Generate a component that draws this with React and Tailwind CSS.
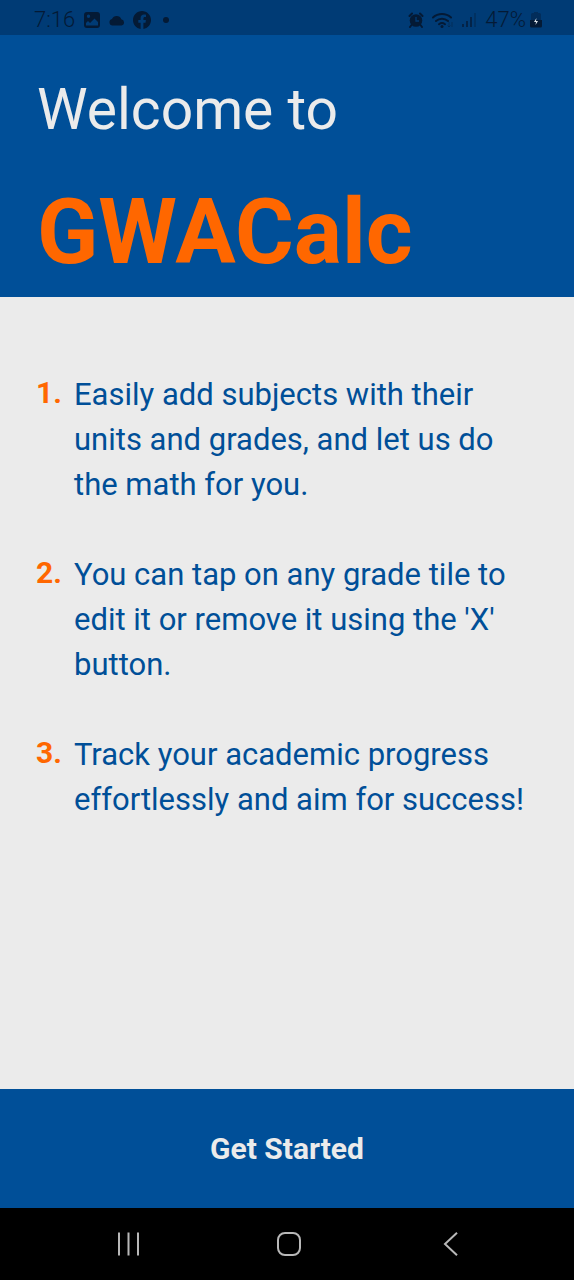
import React from "react";

const steps = [
  "Easily add subjects with their units and grades, and let us do the math for you.",
  "You can tap on any grade tile to edit it or remove it using the 'X' button.",
  "Track your academic progress effortlessly and aim for success!",
];

function PictureIcon() {
  return (
    <svg className="h-[18px] w-[18px]" viewBox="0 0 18 18" aria-hidden="true">
      <path
        fill="currentColor"
        fillRule="evenodd"
        d="M4 1h10a3 3 0 0 1 3 3v10a3 3 0 0 1-3 3H4a3 3 0 0 1-3-3V4a3 3 0 0 1 3-3Zm1.500 2.500a1.700 1.700 0 1 0 0 3.400 1.700 1.700 0 0 0 0-3.400ZM3 14.500h12V11l-3.500-3.500L7 12l-2-2-2 2Z"
      />
    </svg>
  );
}

function CloudIcon() {
  return (
    <svg className="h-3 w-4" viewBox="0 0 16 12" fill="currentColor" aria-hidden="true">
      <path d="M3.500 11.500a3.300 3.300 0 0 1-.5-6.500A5 5 0 0 1 12.300 5.200a3.200 3.200 0 0 1 .2 6.300Z" />
    </svg>
  );
}

function FacebookIcon() {
  return (
    <svg className="h-[18px] w-[18px]" viewBox="0 0 24 24" fill="currentColor" aria-hidden="true">
      <path d="M24 12.070C24 5.410 18.630 0 12 0S0 5.410 0 12.070C0 18.100 4.390 23.090 10.130 24v-8.440H7.080v-3.490h3.050V9.410c0-3.020 1.790-4.690 4.530-4.690 1.310 0 2.690.24 2.690.24v2.970h-1.520c-1.490 0-1.950.93-1.950 1.880v2.260h3.320l-.53 3.490h-2.790V24C19.610 23.090 24 18.100 24 12.070Z" />
    </svg>
  );
}

function AlarmIcon() {
  return (
    <svg className="h-4 w-4" viewBox="0 0 16 16" aria-hidden="true">
      <g fill="none" stroke="currentColor" strokeWidth="2" strokeLinecap="round">
        <path d="M1.500 4 4 1.500M14.500 4 12 1.500M3.500 13 2 15M12.500 13l1.500 2" />
      </g>
      <circle cx="8" cy="8.500" r="6.300" fill="currentColor" />
      <path d="M8 5v4h3" fill="none" stroke="#003b75" strokeWidth="1.300" />
    </svg>
  );
}

function WifiIcon() {
  return (
    <svg className="h-4 w-[22px]" viewBox="0 0 22 16" aria-hidden="true">
      <g fill="none" stroke="currentColor" strokeWidth="2" strokeLinecap="round">
        <path d="M1 5.500a13.500 13.500 0 0 1 18 0M4 9a9 9 0 0 1 12 0M7 12.200a5 5 0 0 1 6 0" />
      </g>
      <circle cx="10" cy="14.500" r="1.500" fill="currentColor" />
      <path d="M17 10v5m-1.500-1.500L17 15l1.500-1.500M20 15v-5" fill="none" stroke="currentColor" opacity=".4" />
    </svg>
  );
}

function SignalIcon() {
  return (
    <svg className="h-4 w-[15px]" viewBox="0 0 15 16" fill="currentColor" aria-hidden="true">
      <rect x="0" y="12" width="2" height="3" opacity=".7" />
      <rect x="4" y="9" width="2" height="6" opacity=".7" />
      <rect x="8" y="5" width="2" height="10" opacity=".7" />
      <rect x="12" y="1" width="2" height="14" opacity=".3" />
    </svg>
  );
}

function BatteryIcon() {
  return (
    <svg className="h-4 w-3" viewBox="0 0 12 16" aria-hidden="true">
      <path d="M4 0h4v1h1.500A1.500 1.500 0 0 1 11 2.500V8H1V2.500A1.500 1.500 0 0 1 2.500 1H4Z" fill="currentColor" opacity=".4" />
      <path d="M0 8h12v6a1.500 1.500 0 0 1-1.500 1.500h-9A1.500 1.500 0 0 1 0 14Z" fill="currentColor" />
      <path d="M6.500 6 4 10h2l-.5 3L8 9H6Z" fill="#dde3e8" />
    </svg>
  );
}

export default function App() {
  return (
    <div className="flex min-h-screen flex-col bg-[#ebebeb] font-['Roboto',sans-serif]">
      <div className="flex h-[35px] items-center justify-between bg-[#003b75] pl-[34px] pr-8 pt-1 text-[#041a35]">
        <div className="flex items-center gap-2">
          <span className="text-[22px] font-light leading-6">7:16</span>
          <PictureIcon />
          <CloudIcon />
          <FacebookIcon />
          <span className="ml-1 h-[6px] w-[6px] rounded-full bg-current" />
        </div>
        <div className="flex items-center gap-2">
          <AlarmIcon />
          <WifiIcon />
          <SignalIcon />
          <div className="flex items-center gap-1">
            <span className="text-[22px] font-light leading-6">47%</span>
            <BatteryIcon />
          </div>
        </div>
      </div>
      <header className="bg-[#004f98] px-[37px] pb-3 pt-10">
        <h1>
          <span className="block text-[57px] leading-[70px] text-[#ebebeb]">Welcome to</span>
          <span className="mt-9 block text-[90px] font-bold leading-[104px] text-[#ff6700]">GWACalc</span>
        </h1>
      </header>
      <main className="flex-1 px-9 pb-10 pt-[75px]">
        <ol className="flex flex-col gap-[45px]">
          {steps.map((step, i) => (
            <li key={step} className="flex">
              <span className="w-[38px] shrink-0 text-[30px] font-bold leading-[42px] text-[#ff6700]">{i + 1}.</span>
              <p className="text-[31px] leading-[45px] text-[#004f98]">{step}</p>
            </li>
          ))}
        </ol>
      </main>
      <button type="button" className="h-[119px] bg-[#004f98] text-[30px] font-bold text-[#ebebeb]">
        Get Started
      </button>
      <nav className="flex h-[72px] items-center justify-around bg-black pl-12 pr-11 text-[#b8b8b8]" aria-label="System">
        <button type="button" aria-label="Recent apps" className="p-2">
          <svg className="h-6 w-6" viewBox="0 0 24 24" fill="none" stroke="currentColor" strokeWidth="2">
            <path d="M3 .5v23M12.500 .5v23M22 .5v23" />
          </svg>
        </button>
        <button type="button" aria-label="Home" className="p-2">
          <svg className="h-6 w-6" viewBox="0 0 24 24" fill="none" stroke="currentColor" strokeWidth="2">
            <rect x="1" y="1" width="22" height="22" rx="7" />
          </svg>
        </button>
        <button type="button" aria-label="Back" className="p-2">
          <svg className="h-6 w-6" viewBox="0 0 24 24" fill="none" stroke="currentColor" strokeWidth="2">
            <path d="M19 .8 7 12l12 11.200" />
          </svg>
        </button>
      </nav>
    </div>
  );
}
